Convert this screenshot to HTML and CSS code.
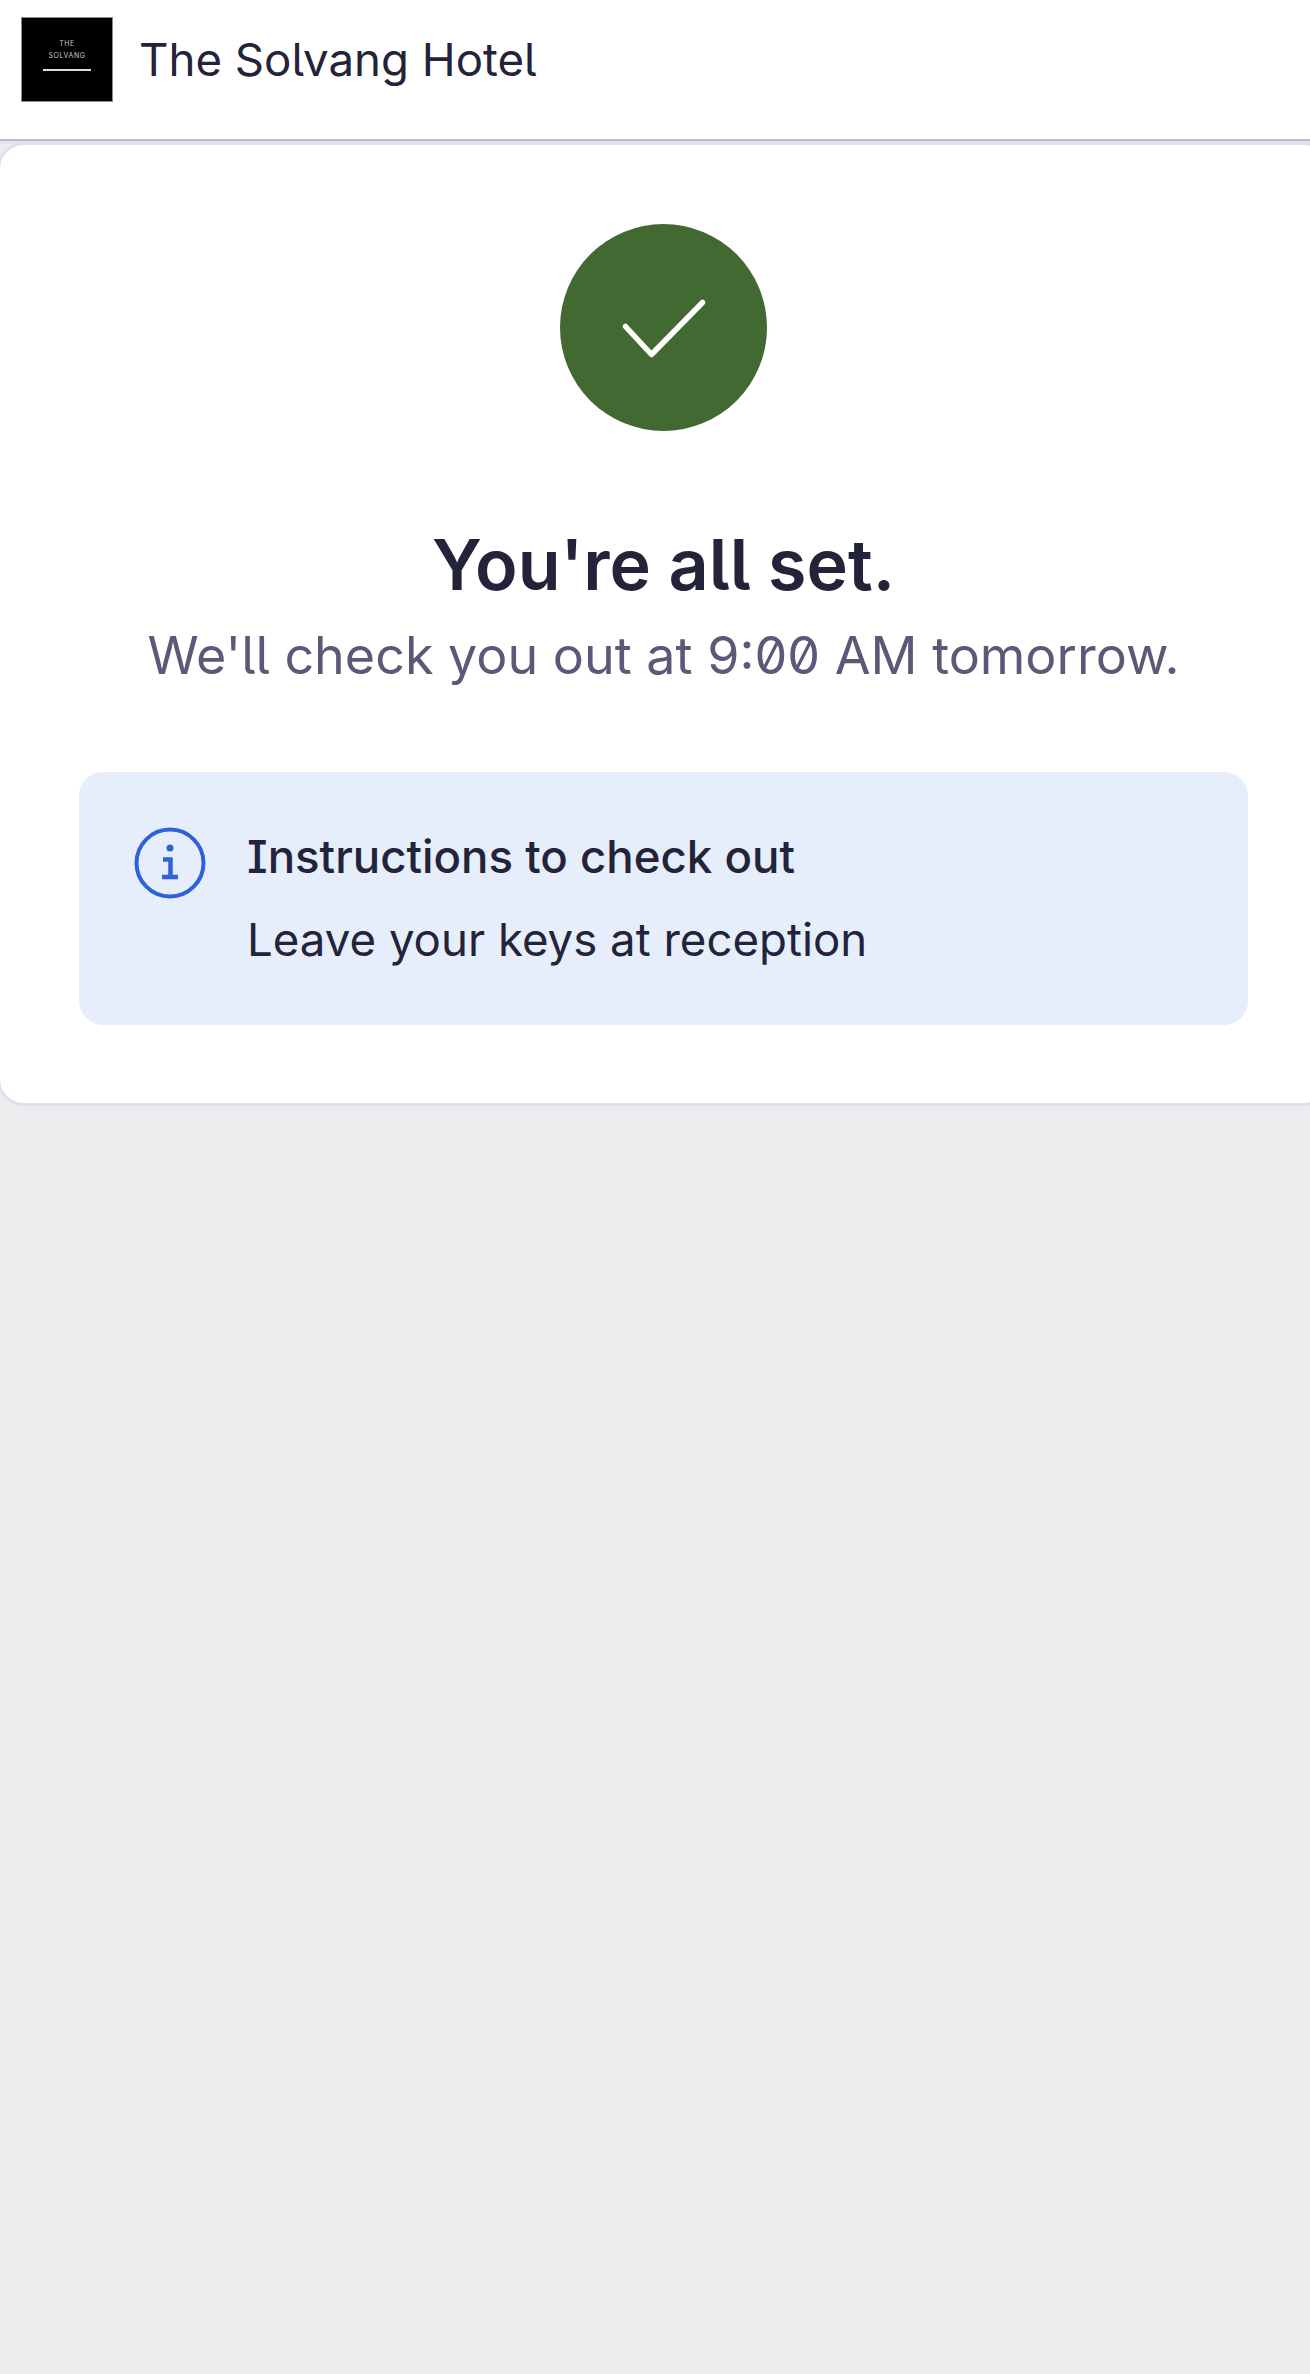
FILE: index.html
```html
<!DOCTYPE html>

<html>

<head>
	<meta http-equiv="content-type" content="text/html; charset=utf-8" />
	<title>The Solvang Hotel</title>
	<link rel="stylesheet" href="styles.css">
</head>

<body>
	<header class="topbar">
		<div class="logo">
			<span class="logo-text">THE</span>
			<span class="logo-text">SOLVANG</span>
			<span class="logo-rule"></span>
		</div>
		<div class="hotel-name">The Solvang Hotel</div>
	</header>

	<main class="card">
		<div class="check-circle">
			<svg width="90" height="66" viewBox="0 0 90 66" fill="none">
				<path d="M6.5 31.5 L32.5 59.5 L83.5 7.5" stroke="#fff" stroke-width="5.5" stroke-linecap="round" stroke-linejoin="round" />
			</svg>
		</div>

		<h1>You're all set.</h1>
		<p class="subtitle">We'll check you out at 9:00 AM tomorrow.</p>

		<div class="notice">
			<svg class="info-icon" width="72" height="72" viewBox="0 0 72 72" fill="none">
				<circle cx="36" cy="36" r="33.5" stroke="#2f62d8" stroke-width="4" />
				<circle cx="36" cy="21" r="3.5" fill="#2f62d8" />
				<path d="M29 32.5 H36.5 V50 M28 50 H44" stroke="#2f62d8" stroke-width="4.5" />
			</svg>
			<div class="notice-text">
				<div class="notice-title">Instructions to check out</div>
				<div class="notice-body">Leave your keys at reception</div>
			</div>
		</div>
	</main>
</body>

</html>
```

FILE: styles.css
```css
html {
	overflow: hidden;
}

body {
	font-family: Inter, "Noto Sans", sans-serif;
	font-feature-settings: "ss02", "zero", "cv05", "cv08";
	background-color: #ececee;
	color: #23233a;
	margin: 0;
	padding: 0;
	height: 2374px;
	overflow: hidden;
}

/* Top bar with logo */
.topbar {
	height: 139px;
	box-sizing: border-box;
	background-color: #fff;
	box-shadow: 0 2px 0 #bdbdc9, 0 5px 0 #e3e3ee;
	display: flex;
	align-items: center;
	gap: 26px;
	padding: 0 0 21px 21px;
}

.logo {
	width: 92px;
	height: 85px;
	box-sizing: border-box;
	background-color: #000;
	border: 1px solid #8a8a8a;
	padding-bottom: 10px;
	display: flex;
	flex-direction: column;
	align-items: center;
	justify-content: center;
	color: #c8c8c8;
}

.logo-text {
	font-size: 7px;
	letter-spacing: 0.6px;
	line-height: 12px;
}

.logo-rule {
	width: 48px;
	height: 2px;
	background-color: #ddd;
	margin-top: 7px;
}

.hotel-name {
	font-size: 45.6px;
	font-weight: 400;
}

/* Main card, runs past the right edge of the window */
.card {
	width: 1327px;
	height: 958px;
	box-sizing: border-box;
	margin-top: 6px;
	background-color: #fff;
	border-radius: 24px;
	box-shadow: 0 0 0 3px #e0e0ea;
	padding: 79px 79px 0;
	display: flex;
	flex-direction: column;
	align-items: center;
}

.check-circle {
	width: 207px;
	height: 207px;
	border-radius: 50%;
	background-color: #436932;
	display: flex;
	align-items: center;
	justify-content: center;
	flex-shrink: 0;
}

h1 {
	font-size: 70px;
	font-weight: 600;
	line-height: 80px;
	margin: 94px 0 0;
}

.subtitle {
	font-size: 52px;
	line-height: 64px;
	color: #5a5a78;
	margin: 19px 0 0;
}

.notice {
	width: 100%;
	height: 253px;
	box-sizing: border-box;
	margin-top: 84px;
	background-color: #e6eefc;
	border-radius: 24px;
	padding: 55px 0 0 55px;
	display: flex;
	gap: 41px;
}

.info-icon {
	flex-shrink: 0;
}

.notice-title {
	font-size: 45.6px;
	font-weight: 500;
	line-height: 60px;
}

.notice-body {
	font-size: 45.6px;
	line-height: 60px;
	margin-top: 23px;
}
```
